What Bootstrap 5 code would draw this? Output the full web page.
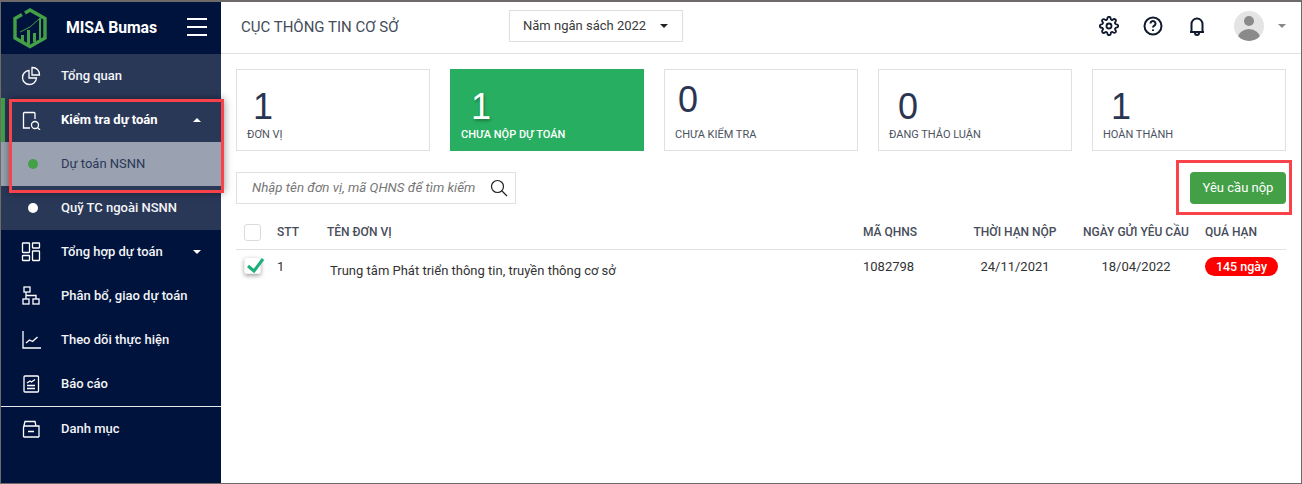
<!doctype html>
<html lang="vi">
<head>
<meta charset="utf-8">
<title>MISA Bumas</title>
<link href="https://cdn.jsdelivr.net/npm/bootstrap@5.3.0/dist/css/bootstrap.min.css" rel="stylesheet">
<style>
html,body{height:100%;overflow:hidden}
body{font-family:Roboto,"Liberation Sans",sans-serif;font-size:13px;color:#333;background:#fff}
.shell{width:1302px;height:484px;border:1px solid #6f6a6a;border-top-width:2px;position:relative;overflow:hidden}
.side{width:220px;background:#00133c;color:#fff;flex:none}
.brand{height:52px;padding-left:11px}
.brand-name{font-size:15.8px;font-weight:700;margin-left:18px;width:120px;letter-spacing:-.1px}
.burger{width:20px;height:18px;border-top:2px solid #fff;border-bottom:2px solid #fff;position:relative;margin-left:1px;margin-top:-2px}
.burger::after{content:"";position:absolute;left:0;right:0;top:6px;height:2px;background:#fff}
.mitem{height:44px;font-size:13px;font-weight:500;padding-left:20px;position:relative;color:#f2f4f7}
.mitem svg{width:20px;height:20px;flex:none;margin-right:20px;fill:none;stroke:#fff;stroke-width:1.3}
.tone{background:#2a3858}
.sel{background:#9aa2b1;color:#2a3858;font-weight:400}
.act{font-weight:700;color:#fff}
.act::before{content:"";position:absolute;left:0;top:0;width:4px;height:88px;background:#43a047}
.subdot{width:10px;height:10px;border-radius:50%;margin-left:7px;margin-right:23px;background:#fff;flex:none}
.sel .subdot{background:#43a047}
.car{position:absolute;left:192px;top:20px;border-left:4px solid transparent;border-right:4px solid transparent;border-top:4px solid #fff}
.car.up{border-top:0;border-bottom:4px solid #fff}
.sline{height:1px;background:#e6e8ec}
.topbar{height:52px;border-bottom:1px solid #e0e0e0;padding-left:20px;padding-right:15px}
.orgname{font-size:15px;color:#444b59;width:268px}
.yearbox{width:174px;height:32px;border:1px solid #dedede;font-size:13px;color:#3a3a3a;padding:0 14px 0 13px;margin-bottom:3px}
.caret-d{border-left:4px solid transparent;border-right:4px solid transparent;border-top:4px solid #222}
.tico{width:24px;height:24px;fill:none;stroke:#0f1a2e;stroke-width:2;flex:none}
.gearbox{width:24px;height:24px;display:flex;align-items:center;justify-content:center;flex:none}
.gearbox svg{width:20px;height:20px;fill:none;stroke:#0f1a2e;stroke-width:2.200}
.topgroup{margin-bottom:3px}
.gap-a{margin-left:20px}
.gap-b{margin-left:20px}
.avatar{width:30px;height:30px;border-radius:50%;background:#e4e4e4;overflow:hidden;flex:none;margin-left:25px}
.caret-g{border-left:4px solid transparent;border-right:4px solid transparent;border-top:4px solid #888;margin-left:14px}
.stats{padding:15px 15px 0;gap:20px}
.stat{width:194px;height:82px;border:1px solid #e0e0e0;padding:0 10px;position:relative}
.num{font-size:36px;line-height:36px;color:#2a3552;font-family:"Liberation Sans",sans-serif;position:absolute;top:var(--t);left:var(--l)}
.lbl{position:absolute;left:10px;top:57px;font-size:11px;color:#4b5260;white-space:nowrap}
.stat-on{background:#27ae60;border-color:#27ae60;color:#fff}
.stat-on .num{color:#fff;text-shadow:1px 2px 3px rgba(0,0,0,.3)}
.stat-on .lbl{color:#fff;font-weight:500}
.tools{padding:0 15px;margin-top:21px;height:32px}
.searchbox{width:280px;height:32px;border:1px solid #e0e0e0;padding-left:15px;padding-right:6px;font-style:italic;font-size:13.3px;color:#777}
.reqbtn{background:#43a047;color:#fff;border:0;border-radius:4px;width:96px;height:32px;font-size:13px;padding:0;--bs-btn-hover-bg:#43a047}
.grid-head,.grid-row{margin:0 15px;display:grid;grid-template-columns:41px 50px 536px 96px 112px 130px 85px}
.grid-head{height:35px;margin-top:11px;border-bottom:1px solid #e0e0e0;font-size:12px;align-items:center;font-weight:500;color:#474d5a}
.grid-row{height:36px;font-size:13px;color:#333}
.cbx{width:17px;height:17px;border:1px solid #dcdcdc;border-radius:3px;margin-left:8px;display:block;position:relative}
.cbx-on{box-shadow:0 2px 4px rgba(0,0,0,.35);border-color:#eee;margin-top:7px}
.cbx-on svg{position:absolute;left:0;top:0;width:19px;height:19px;overflow:visible}
.ctr{text-align:center}
.cell{margin-top:7px}
.cell-name{margin-top:11px;padding-left:3px}
.lead-pad{padding-left:4px}
.late{background:#f00;color:#fff;border-radius:10px;width:73px;height:19px;line-height:19px;text-align:center;font-weight:500;font-size:12.5px;margin-top:7px}
.redbox{position:absolute;border:3px solid #f9424a;pointer-events:none}
.rb1{left:8px;top:97px;width:215px;height:94px;box-shadow:0 0 8px rgba(0,0,0,.45)}
.rb2{left:1175px;top:158px;width:116px;height:55px}
</style>
</head>
<body>
<div class="shell d-flex">
  <aside class="side d-flex flex-column">
    <div class="brand d-flex align-items-center">
      <svg width="36" height="41" viewBox="0 0 36 41" fill="none"><path d="M13 5 18 2 33 10.500V30L18 38.500 3 30V10.500L10 6.500" stroke="#43a047" stroke-width="3.400"/><path d="M9 27h3v7H9zM15 22h3v14h-3zM21 25h3v9h-3zM27 10h2v21h-2z" fill="#43a047"/><path d="M8 24 18 19l9-8" stroke="#43a047" stroke-width="1"/></svg>
      <div class="brand-name">MISA Bumas</div>
      <div class="burger"></div>
    </div>
    <div class="mitem tone d-flex align-items-center"><svg viewBox="0 0 20 20"><path d="M8 4.500a7 7 0 1 0 7.500 7.500H8z"/><path d="M11 1.500a7 7 0 0 1 7.500 7.500H11z"/></svg>Tổng quan</div>
    <div class="mitem tone act d-flex align-items-center"><svg viewBox="0 0 20 20"><path d="M9 18H2.500V3.500a1 1 0 0 1 1-1H13a1 1 0 0 1 1 1V9"/><circle cx="14" cy="15" r="3.500"/><path d="m16.500 17.500 2.500 2.500"/></svg>Kiểm tra dự toán<span class="car up"></span></div>
    <div class="mitem sel d-flex align-items-center"><span class="subdot"></span>Dự toán NSNN</div>
    <div class="mitem tone d-flex align-items-center"><span class="subdot"></span>Quỹ TC ngoài NSNN</div>
    <div class="mitem d-flex align-items-center"><svg viewBox="0 0 20 20"><rect x="1.500" y="1" width="7" height="9.500" rx=".5"/><rect x="11.500" y="1" width="7" height="5" rx=".5"/><rect x="1.500" y="13.500" width="7" height="5" rx=".5"/><rect x="11.500" y="9" width="7" height="9.500" rx=".5"/></svg>Tổng hợp dự toán<span class="car"></span></div>
    <div class="mitem d-flex align-items-center"><svg viewBox="0 0 20 20"><rect x="3" y="1" width="6" height="5"/><rect x="2" y="13" width="6" height="5"/><rect x="12" y="13" width="6" height="5"/><path d="M5 6v7M5 9.500h10V13"/></svg>Phân bổ, giao dự toán</div>
    <div class="mitem d-flex align-items-center"><svg viewBox="0 0 20 20"><path d="M2 1v17h18M5 13l3.500-3 3 1.500 5-4.500"/></svg>Theo dõi thực hiện</div>
    <div class="mitem d-flex align-items-center"><svg viewBox="0 0 20 20"><rect x="3" y="2" width="14.500" height="16" rx="1"/><path d="m6 9 3-2 1.500 1L14 5.500M6 11.500h8M6 14.500h8"/></svg>Báo cáo</div>
    <div class="sline"></div>
    <div class="mitem d-flex align-items-center"><svg viewBox="0 0 20 20"><path d="M2.500 18V8.500L4 2.500h10l1 4.500H3M15 7h3v11M2.500 18h15.500M7 12.500h6"/></svg>Danh mục</div>
  </aside>
  <main class="flex-grow-1 d-flex flex-column">
    <header class="topbar d-flex align-items-center">
      <div class="orgname">CỤC THÔNG TIN CƠ SỞ</div>
      <div class="yearbox d-flex align-items-center justify-content-between"><span>Năm ngân sách 2022</span><span class="caret-d"></span></div>
      <div class="ms-auto d-flex align-items-center topgroup">
        <span class="gearbox"><svg viewBox="0 0 24 24"><circle cx="12" cy="12" r="3"/><path d="M19.400 15a1.650 1.650 0 0 0 .33 1.820l.06.06a2 2 0 0 1 0 2.830 2 2 0 0 1-2.830 0l-.06-.06a1.650 1.650 0 0 0-1.820-.33 1.650 1.650 0 0 0-1 1.510V21a2 2 0 0 1-2 2 2 2 0 0 1-2-2v-.09A1.650 1.650 0 0 0 9 19.400a1.650 1.650 0 0 0-1.820.33l-.06.06a2 2 0 0 1-2.830 0 2 2 0 0 1 0-2.830l.06-.06a1.650 1.650 0 0 0 .33-1.820 1.650 1.650 0 0 0-1.510-1H3a2 2 0 0 1-2-2 2 2 0 0 1 2-2h.09A1.650 1.650 0 0 0 4.600 9a1.650 1.650 0 0 0-.33-1.820l-.06-.06a2 2 0 0 1 0-2.830 2 2 0 0 1 2.830 0l.06.06a1.650 1.650 0 0 0 1.820.33H9a1.650 1.650 0 0 0 1-1.510V3a2 2 0 0 1 2-2 2 2 0 0 1 2 2v.09a1.650 1.650 0 0 0 1 1.510 1.650 1.650 0 0 0 1.820-.33l.06-.06a2 2 0 0 1 2.830 0 2 2 0 0 1 0 2.830l-.06.06a1.650 1.650 0 0 0-.33 1.820V9a1.650 1.650 0 0 0 1.510 1H21a2 2 0 0 1 2 2 2 2 0 0 1-2 2h-.09a1.650 1.650 0 0 0-1.510 1z"/></svg></span>
        <svg class="tico gap-a" viewBox="0 0 24 24"><circle cx="12" cy="12" r="8.500"/><path d="M9.500 9.500a2.500 2.500 0 1 1 3.800 2.100c-.9.600-1.300 1-1.300 2"/><path d="M12 15.500v1.500"/></svg>
        <svg class="tico gap-b" viewBox="0 0 24 24"><path d="M6.500 18V10a5.500 5.500 0 0 1 11 0v8M5 18h14M10 19a2 2 0 0 0 4 0"/></svg>
        <div class="avatar"><svg width="30" height="30" viewBox="0 0 30 30"><circle cx="15" cy="10" r="5" fill="#8a8a8a"/><ellipse cx="15" cy="27" rx="11" ry="9" fill="#8a8a8a"/></svg></div>
        <span class="caret-g"></span>
      </div>
    </header>
    <section class="stats d-flex">
      <div class="stat"><span class="num" style="--t:19px;--l:16px">1</span><span class="lbl">ĐƠN VỊ</span></div>
      <div class="stat stat-on"><span class="num" style="--t:19px;--l:20px">1</span><span class="lbl">CHƯA NỘP DỰ TOÁN</span></div>
      <div class="stat"><span class="num" style="--t:12px;--l:13px">0</span><span class="lbl">CHƯA KIỂM TRA</span></div>
      <div class="stat"><span class="num" style="--t:19px;--l:19px">0</span><span class="lbl">ĐANG THẢO LUẬN</span></div>
      <div class="stat"><span class="num" style="--t:19px;--l:18px">1</span><span class="lbl">HOÀN THÀNH</span></div>
    </section>
    <section class="tools d-flex justify-content-between">
      <div class="searchbox d-flex align-items-center justify-content-between"><span>Nhập tên đơn vị, mã QHNS để tìm kiếm</span><svg width="20" height="20" viewBox="0 0 20 20" fill="none" stroke="#222" stroke-width="1.200"><circle cx="8.500" cy="8.500" r="6"/><path d="m13 13 5 5"/></svg></div>
      <button class="btn reqbtn">Yêu cầu nộp</button>
    </section>
    <div class="grid-head">
      <span><i class="cbx"></i></span><span>STT</span><span>TÊN ĐƠN VỊ</span><span>MÃ QHNS</span><span class="ctr">THỜI HẠN NỘP</span><span class="ctr">NGÀY GỬI YÊU CẦU</span><span class="lead-pad">QUÁ HẠN</span>
    </div>
    <div class="grid-row">
      <span><i class="cbx cbx-on"><svg viewBox="0 0 19 19" fill="none" stroke="#1fae7a" stroke-width="3"><path d="m3 8 6 5 9-12"/></svg></i></span>
      <span class="cell">1</span><span class="cell-name">Trung tâm Phát triển thông tin, truyền thông cơ sở</span><span class="cell">1082798</span><span class="ctr cell">24/11/2021</span><span class="ctr cell">18/04/2022</span><span class="lead-pad"><div class="late">145 ngày</div></span>
    </div>
  </main>
  <div class="redbox rb1"></div>
  <div class="redbox rb2"></div>
</div>
</body>
</html>
